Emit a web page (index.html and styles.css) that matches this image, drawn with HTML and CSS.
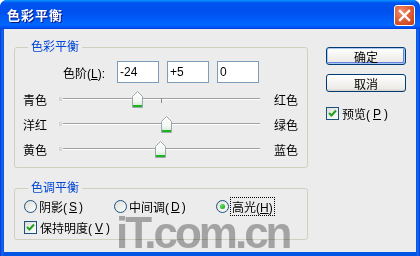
FILE: index.html
```
<!DOCTYPE html>
<html lang="zh-CN">
<head>
	<meta charset="UTF-8">
	<title>色彩平衡</title>
	<link rel="stylesheet" href="styles.css">
</head>
<body>
	<div class="window">
		<div class="titlebar">
			<span class="title">色彩平衡</span>
			<span class="close">
				<svg width="13" height="13" viewBox="0 0 13 13"><path d="M2 2 L11 11 M11 2 L2 11" stroke="#fff" stroke-width="2.4" stroke-linecap="square"/></svg>
			</span>
		</div>
		<div class="content">
			<div class="main">
				<fieldset class="group balance">
					<legend>色彩平衡</legend>
					<div class="levels">
						<span class="levels-label">色阶(<u>L</u>):</span>
						<input class="num" type="text" value="-24">
						<input class="num" type="text" value="+5">
						<input class="num" type="text" value="0">
					</div>
					<div class="slider-row">
						<span class="lbl">青色</span>
						<div class="track">
							<span class="tick"></span>
							<span class="thumb" style="left:69px"><svg width="11" height="17" viewBox="0 0 11 17"><defs><linearGradient id="tg" x1="0" y1="0" x2="0" y2="1"><stop offset="0" stop-color="#fff"/><stop offset="0.6" stop-color="#f4f7f2"/><stop offset="1" stop-color="#c8e8c8"/></linearGradient></defs><polygon points="0.5,5.5 5.5,0.5 10.5,5.5 10.5,16.5 0.5,16.5" fill="url(#tg)" stroke="#9aa8b0"/><rect x="1" y="14" width="9" height="2" fill="#1fb41f"/></svg></span>
						</div>
						<span class="lbl-r">红色</span>
					</div>
					<div class="slider-row">
						<span class="lbl">洋红</span>
						<div class="track">
							<span class="tick"></span>
							<span class="thumb" style="left:98px"><svg width="11" height="17" viewBox="0 0 11 17"><polygon points="0.5,5.5 5.5,0.5 10.5,5.5 10.5,16.5 0.5,16.5" fill="url(#tg)" stroke="#9aa8b0"/><rect x="1" y="14" width="9" height="2" fill="#1fb41f"/></svg></span>
						</div>
						<span class="lbl-r">绿色</span>
					</div>
					<div class="slider-row">
						<span class="lbl">黄色</span>
						<div class="track">
							<span class="tick"></span>
							<span class="thumb" style="left:92px"><svg width="11" height="17" viewBox="0 0 11 17"><polygon points="0.5,5.5 5.5,0.5 10.5,5.5 10.5,16.5 0.5,16.5" fill="url(#tg)" stroke="#9aa8b0"/><rect x="1" y="14" width="9" height="2" fill="#1fb41f"/></svg></span>
						</div>
						<span class="lbl-r">蓝色</span>
					</div>
				</fieldset>

				<fieldset class="group tone">
					<legend>色调平衡</legend>
					<div class="radios">
						<span class="radio-item r1"><span class="radio"></span>阴影(<u>S</u>)</span>
						<span class="radio-item r2"><span class="radio"></span>中间调(<u>D</u>)</span>
						<span class="radio-item"><span class="radio checked"></span><span class="focus">高光(<u>H</u>)</span></span>
					</div>
					<div class="check-row">
						<span class="checkbox"><svg width="9" height="9" viewBox="0 0 9 9"><path d="M1 4 L3.5 6.5 L8 1.5" fill="none" stroke="#21a121" stroke-width="2"/></svg></span>保持明度(<u>V</u>)
					</div>
				</fieldset>
			</div>

			<div class="side">
				<button class="btn default">确定</button>
				<button class="btn">取消</button>
				<div class="check-row preview">
					<span class="checkbox"><svg width="9" height="9" viewBox="0 0 9 9"><path d="M1 4 L3.5 6.5 L8 1.5" fill="none" stroke="#21a121" stroke-width="2"/></svg></span>预览(<u>P</u>)
				</div>
			</div>

			<div class="watermark">iT.com.cn</div>
		</div>
	</div>
</body>
</html>
```

FILE: styles.css
```
	body {
		margin: 0;
		font-family: "Liberation Sans", "Noto Sans CJK SC", sans-serif;
		font-size: 12px;
		color: #000;}

	.window {
		width: 420px;
		height: 256px;
		background: linear-gradient(to right, #0831d9 0, #166aee 2px, #0055e5 4px, #0055e5 416px, #166aee 418px, #0831d9 420px);
		border-radius: 7px 7px 0 0;
		overflow: hidden;}

	.titlebar {
		position: relative;
		height: 29px;
		background: linear-gradient(to bottom, #0997ff 0%, #0053ee 10%, #0050ee 40%, #0066ff 85%, #005bff 92%, #003dd7 100%);
		display: flex;
		align-items: center;}
	.title {
		margin-left: 7px;
		color: #fff;
		font-weight: bold;
		font-size: 13px;
		text-shadow: 1px 1px #0a1883;
		letter-spacing: 1px;}
	.close {
		position: absolute;
		left: 394px;
		top: 5px;
		width: 19px;
		height: 19px;
		border: 1px solid #fff;
		border-radius: 3px;
		background: radial-gradient(circle at 35% 30%, #f0906c 0%, #e0603a 45%, #c23a12 100%);
		display: flex;
		align-items: center;
		justify-content: center;}

	.content {
		position: relative;
		margin: 0 4px;
		height: 223px;
		background: #ececec;
		display: flex;
		padding: 12px 0 0 10px;
		box-sizing: border-box;}

	.main {
		width: 294px;}

	.group {
		margin: 0;
		padding: 0 0 5px 0;
		border: 1px solid #d0d0bf;
		border-radius: 3px;
		box-sizing: border-box;
		width: 294px;}
	.group legend {
		margin-left: 13px;
		padding: 0 3px;
		line-height: 13px;
		color: #0046d5;}

	.levels {
		display: flex;
		align-items: center;
		margin-top: 7px;
		height: 22px;
		padding-left: 48px;}
	.levels-label {
		width: 54px;}
	.num {
		width: 42px;
		height: 22px;
		box-sizing: border-box;
		border: 1px solid #7f9db9;
		padding: 0 2px;
		margin: 0 8px 0 0;
		font: inherit;
		background: #fff;
		outline: none;}

	.slider-row {
		display: flex;
		align-items: center;
		height: 25px;
		padding-left: 8px;}
	.levels + .slider-row {
		margin-top: 4px;}
	.lbl {
		width: 40px;}
	.lbl-r {
		margin-left: 14px;}
	.track {
		position: relative;
		width: 197px;
		height: 25px;}
	.track::before {
		content: "";
		position: absolute;
		left: 0;
		right: 0;
		top: 11px;
		border-top: 1px solid #a0a0a0;
		border-bottom: 1px solid #fff;}
	.track::after {
		content: "";
		position: absolute;
		left: -4px;
		top: 10px;
		width: 3px;
		height: 4px;
		background: #d8d8d8;}
	.tick {
		position: absolute;
		left: 98px;
		top: 11px;
		width: 1px;
		height: 5px;
		background: #8a8a8a;}
	.thumb {
		position: absolute;
		top: 4px;
		width: 11px;
		height: 17px;
		line-height: 0;}

	.tone {
		margin-top: 14px;
		padding-bottom: 3px;}
	.radios {
		display: flex;
		align-items: center;
		height: 17px;
		margin-top: 3px;
		padding-left: 9px;}
	.radio-item {
		display: flex;
		align-items: center;
		gap: 2px;}
	.r1 {
		width: 90px;}
	.r2 {
		width: 102px;}
	.radio {
		width: 11px;
		height: 11px;
		border: 1px solid #1c5180;
		border-radius: 50%;
		background: linear-gradient(135deg, #dcdcd7, #fff);
		display: flex;
		align-items: center;
		justify-content: center;}
	.radio.checked::after {
		content: "";
		width: 5px;
		height: 5px;
		border-radius: 50%;
		background: radial-gradient(circle at 35% 35%, #62e05e, #0a9e0a);}
	.focus {
		outline: 1px dotted #000;
		padding: 0 1px;}

	.check-row {
		display: flex;
		align-items: center;
		gap: 3px;
		height: 17px;
		margin-top: 4px;
		padding-left: 9px;}
	.checkbox {
		width: 11px;
		height: 11px;
		border: 1px solid #1c5180;
		background: linear-gradient(135deg, #dcdcd7, #fff);
		display: flex;
		align-items: center;
		justify-content: center;}

	.side {
		margin-left: 18px;
		padding-top: 6px;
		width: 80px;}
	.btn {
		display: block;
		width: 80px;
		height: 18px;
		padding: 0;
		border: 1px solid #003c74;
		border-radius: 3px;
		background: linear-gradient(#fff, #ecebe6 85%, #d6d0c5);
		font: inherit;
		color: #000;}
	.btn.default {
		box-shadow: inset 0 0 0 1px #a8c8f0, inset -1px -1px 0 1px #6982ee;}
	.btn + .btn {
		margin-top: 9px;}
	.preview {
		margin-top: 13px;
		padding-left: 0;}

	.watermark {
		position: absolute;
		left: 112px;
		top: 179px;
		line-height: 50px;
		font-family: "Liberation Sans", sans-serif;
		font-weight: bold;
		font-size: 44px;
		letter-spacing: -3px;
		color: #b0b0b0;
		mix-blend-mode: multiply;
		pointer-events: none;}
```
